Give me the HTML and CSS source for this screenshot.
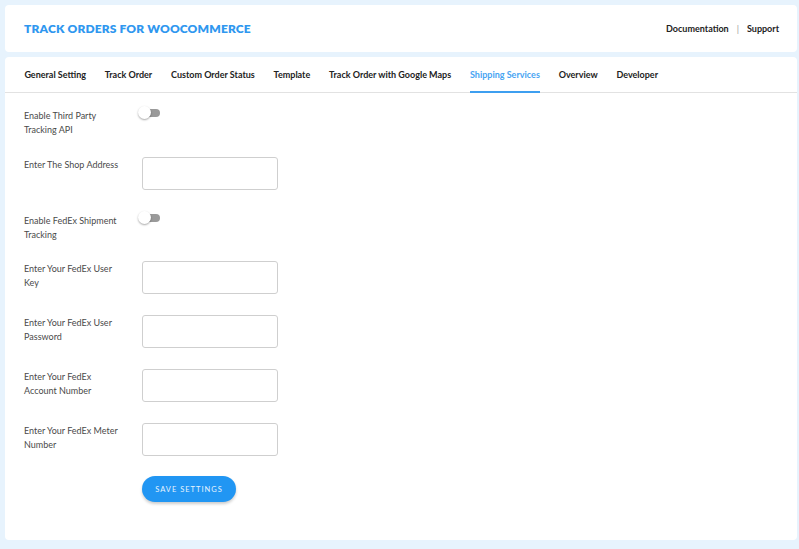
FILE: index.html
```html
<!DOCTYPE html>
<html>
<head>
<meta charset="utf-8">
<link rel="stylesheet" href="styles.css">
</head>
<body>
<div class="page">
  <header class="card header">
    <h1 class="title">TRACK ORDERS FOR WOOCOMMERCE</h1>
    <nav class="links">
      <a class="link">Documentation</a>
      <span class="sep">|</span>
      <a class="link">Support</a>
    </nav>
  </header>
  <main class="card main">
    <ul class="tabs">
      <li class="tab">General Setting</li>
      <li class="tab">Track Order</li>
      <li class="tab">Custom Order Status</li>
      <li class="tab">Template</li>
      <li class="tab">Track Order with Google Maps</li>
      <li class="tab active">Shipping Services</li>
      <li class="tab">Overview</li>
      <li class="tab">Developer</li>
    </ul>
    <form class="form">
      <div class="row row-toggle">
        <label class="label">Enable Third Party Tracking API</label>
        <span class="toggle"><span class="knob"></span></span>
      </div>
      <div class="row">
        <label class="label">Enter The Shop Address</label>
        <input class="input" type="text">
      </div>
      <div class="row row-toggle">
        <label class="label">Enable FedEx Shipment Tracking</label>
        <span class="toggle"><span class="knob"></span></span>
      </div>
      <div class="row">
        <label class="label">Enter Your FedEx User Key</label>
        <input class="input" type="text">
      </div>
      <div class="row">
        <label class="label">Enter Your FedEx User Password</label>
        <input class="input" type="text">
      </div>
      <div class="row">
        <label class="label">Enter Your FedEx Account Number</label>
        <input class="input" type="text">
      </div>
      <div class="row">
        <label class="label">Enter Your FedEx Meter Number</label>
        <input class="input" type="text">
      </div>
      <div class="row">
        <span class="label"></span>
        <button class="btn" type="button">SAVE SETTINGS</button>
      </div>
    </form>
  </main>
</div>
</body>
</html>
```
FILE: styles.css
```css
* { box-sizing: border-box; }
html, body { margin: 0; padding: 0; }
body {
  background: #e7f3fd;
  font-family: Lato, "Open Sans", sans-serif;
  color: #333;
  width: 799px;
  height: 549px;
  overflow: hidden;
}
.page {
  padding: 5px 2px 0 5px;
  display: flex;
  flex-direction: column;
  gap: 5px;
}
.card {
  background: #fff;
  border-radius: 4px;
}
.header {
  height: 47px;
  display: flex;
  align-items: center;
  justify-content: space-between;
  padding: 0 18px 0 19px;
}
.title {
  margin: 0;
  font-size: 12px;
  font-weight: 800;
  color: #2f97ef;
  letter-spacing: 0.15px;
}
.links {
  display: flex;
  align-items: center;
  gap: 8px;
  font-size: 9px;
  font-weight: 700;
  color: #222;
}
.sep { color: #999; font-weight: 400; }
.main {
  height: 483px;
}
.tabs {
  list-style: none;
  margin: 0;
  padding: 0 0 0 10px;
  display: flex;
  border-bottom: 1px solid #e2e2e2;
  height: 36px;
}
.tab {
  margin: 0 9.4px;
  font-size: 9px;
  font-weight: 700;
  color: #222;
  padding-top: 12px;
  height: 36px;
  border-bottom: 2px solid transparent;
}
.tab.active {
  color: #48a4f2;
  border-bottom-color: #3d9ff0;
}
.form {
  padding: 13px 0 0 19px;
  display: flex;
  flex-direction: column;
  gap: 20.75px;
}
.row {
  display: flex;
  align-items: flex-start;
}
.row-toggle { height: 30px; }
.label {
  width: 118px;
  font-size: 9px;
  line-height: 14px;
  color: #4a4a4a;
  padding-right: 20px;
  padding-top: 1px;
}
.row-toggle .label { padding-top: 3px; }
.input {
  width: 136px;
  height: 33px;
  margin: 0;
  border: 1px solid #cfcfcf;
  border-radius: 3px;
  background: #fff;
}
.toggle {
  position: relative;
  display: block;
  width: 22px;
  height: 13px;
  margin-left: -4px;
}
.toggle::before {
  content: "";
  position: absolute;
  left: 3px;
  top: 3px;
  width: 19px;
  height: 8px;
  border-radius: 4px;
  background: #9a9a9a;
}
.knob {
  position: absolute;
  left: 0;
  top: 0;
  width: 13px;
  height: 13px;
  border-radius: 50%;
  background: #fff;
  box-shadow: 0 1px 2px rgba(0,0,0,0.35);
}
.btn {
  width: 94px;
  height: 26px;
  border: none;
  border-radius: 13px;
  background: #2196f3;
  color: #e6f3fd;
  font-family: Lato, sans-serif;
  font-size: 7.5px;
  letter-spacing: 1px;
  font-weight: 400;
  box-shadow: 0 2px 3px rgba(0,0,0,0.2);
  padding: 0;
}
```
